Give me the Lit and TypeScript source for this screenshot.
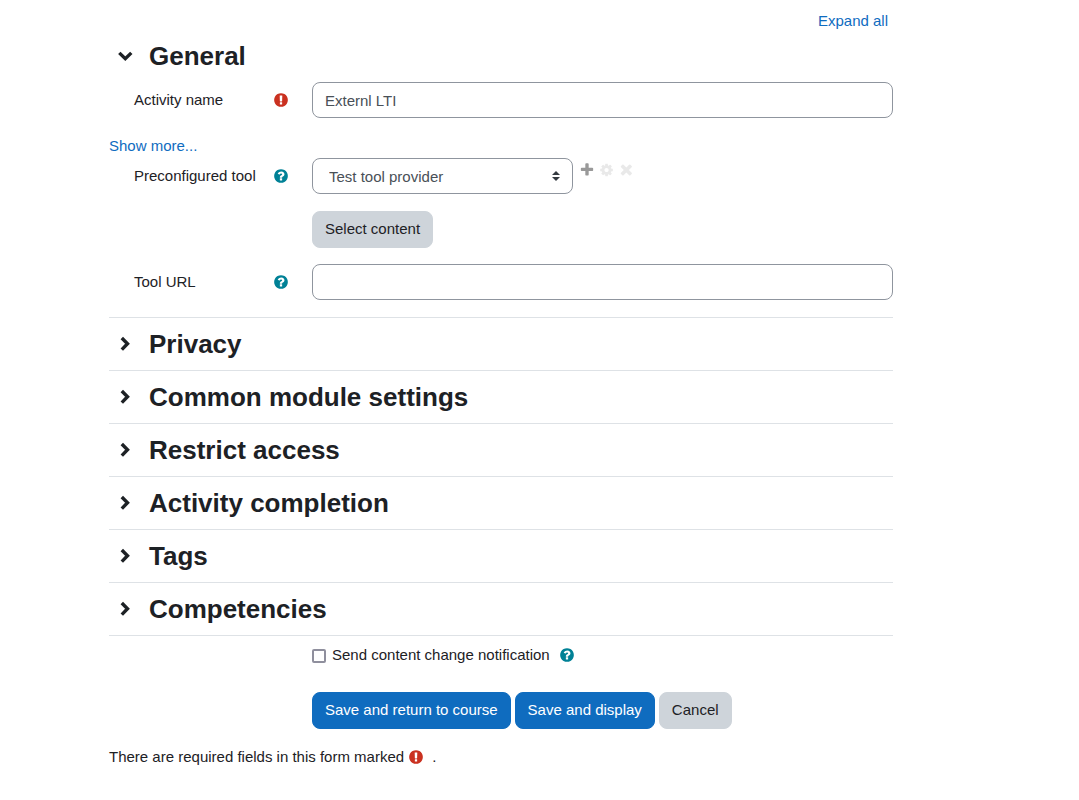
import { LitElement, html, css, svg } from "lit";
import { customElement, property, state } from "lit/decorators.js";

interface IconShape {
  box: string;
  path: string;
}

const ICONS: Record<string, IconShape> = {
  required: {
    box: "0 0 1792 1792",
    path: "M896 128q209 0 385.5 103t279.5 279.5 103 385.5-103 385.5-279.5 279.5-385.5 103-385.5-103-279.5-279.5-103-385.5 103-385.5 279.5-279.5 385.5-103zm128 1247v-190q0-14-9-23.5t-22-9.5h-192q-13 0-23 10t-10 23v190q0 13 10 23t23 10h192q13 0 22-9.5t9-23.5zm-2-344l18-621q0-12-10-18-10-8-24-8h-220q-14 0-24 8-10 6-10 18l17 621q0 10 10 17.5t24 7.5h185q14 0 23.5-7.5t10.5-17.5z",
  },
  help: {
    box: "0 0 1792 1792",
    path: "M1024 1376v-192q0-14-9-23t-23-9h-192q-14 0-23 9t-9 23v192q0 14 9 23t23 9h192q14 0 23-9t9-23zm256-672q0-88-55.5-163t-138.5-116-170-41q-243 0-371 213-15 24 8 42l132 100q7 6 19 6 16 0 25-12 53-68 86-92 34-24 86-24 48 0 85.5 26t37.5 59q0 38-20 61t-68 45q-63 28-115.5 86.5t-52.5 125.5v36q0 14 9 23t23 9h192q14 0 23-9t9-23q0-19 21.5-49.5t54.5-49.5q32-18 49-28.5t46-35 44.5-48 28-60.5 12.5-81zm384 192q0 209-103 385.5t-279.5 279.5-385.5 103-385.5-103-279.5-279.5-103-385.5 103-385.5 279.5-279.5 385.5-103 385.5 103 279.5 279.5 103 385.5z",
  },
  add: {
    box: "-20 -20 1832 1832",
    path: "M1600 736v192q0 40-28 68t-68 28h-416v416q0 40-28 68t-68 28h-192q-40 0-68-28t-28-68v-416h-416q-40 0-68-28t-28-68v-192q0-40 28-68t68-28h416v-416q0-40 28-68t68-28h192q40 0 68 28t28 68v416h416q40 0 68 28t28 68z",
  },
  edit: {
    box: "-20 -76 1944 1944",
    path: "M1152 896q0-106-75-181t-181-75-181 75-75 181 75 181 181 75 181-75 75-181zm512-109v222q0 12-8 23t-20 13l-185 28q-19 54-39 91 35 50 107 138 10 12 10 25t-9 23q-27 37-99 108t-94 71q-12 0-26-9l-138-108q-44 23-91 38-16 136-29 186-7 28-36 28h-222q-14 0-24.5-8.5t-11.5-21.5l-28-184q-49-16-90-37l-141 107q-10 9-25 9-14 0-25-11-126-114-165-168-7-10-7-23 0-12 8-23 15-21 51-66.5t54-70.5q-27-50-41-99l-183-27q-13-2-21-12.5t-8-23.5v-222q0-12 8-23t19-13l186-28q14-46 39-92-40-57-107-138-10-12-10-24 0-10 9-23 26-36 98.5-107.5t94.5-71.5q13 0 26 10l138 107q44-23 91-38 16-136 29-186 7-28 36-28h222q14 0 24.5 8.5t11.5 21.5l28 184q49 16 90 37l142-107q9-9 24-9 13 0 25 10 129 119 165 170 7 8 7 22 0 12-8 23-15 21-51 66.5t-54 70.5q26 50 41 98l183 28q13 2 21 12.5t8 23.5z",
  },
  remove: {
    box: "116 110 1700 1700",
    path: "M1490 1322q0 40-28 68l-136 136q-28 28-68 28t-68-28l-294-294-294 294q-28 28-68 28t-68-28l-136-136q-28-28-28-68t28-68l294-294-294-294q-28-28-28-68t28-68l136-136q28-28 68-28t68 28l294 294 294-294q28-28 68-28t68 28l136 136q28 28 28 68t-28 68l-294 294 294 294q28 28 28 68z",
  },
};

@customElement("form-icon")
class FormIcon extends LitElement {
  @property() name = "help";

  static styles = css`
    :host {
      display: inline-flex;
      flex: none;
    }
    .icon {
      display: block;
      width: 16px;
      height: 16px;
      fill: currentColor;
    }
  `;

  render() {
    const icon = ICONS[this.name];
    return html`<svg class="icon" viewBox=${icon.box} aria-hidden="true">
      ${svg`<path d=${icon.path}></path>`}
    </svg>`;
  }
}

@customElement("form-section")
class FormSection extends LitElement {
  @property() heading = "";
  @property({ type: Boolean, reflect: true }) open = false;

  static styles = css`
    :host {
      display: block;
      border-bottom: 1px solid #dee2e6;
    }
    .header {
      display: flex;
      align-items: center;
      gap: 8px;
      height: 52px;
    }
    .toggle {
      display: flex;
      align-items: center;
      justify-content: center;
      width: 32px;
      height: 32px;
      padding: 0;
      border: 0;
      border-radius: 50%;
      background: none;
      color: #1d2125;
      cursor: pointer;
    }
    .chevron {
      width: 16px;
      height: 16px;
      fill: none;
      stroke: currentColor;
      stroke-width: 3.4;
    }
    .title {
      margin: 0;
      font-size: 26px;
      line-height: 32px;
      font-weight: 700;
    }
    .body {
      padding-bottom: 17px;
    }
  `;

  private toggle() {
    this.open = !this.open;
  }

  render() {
    return html`
      <div class="header">
        <button
          class="toggle"
          type="button"
          aria-label=${this.heading}
          aria-expanded=${this.open ? "true" : "false"}
          @click=${this.toggle}
        >
          <svg class="chevron" viewBox="0 0 16 16" aria-hidden="true">
            ${this.open
              ? svg`<path d="M2.3 4.9L8.3 10.7L14.3 4.9"></path>`
              : svg`<path d="M4.8 2L10.5 7.8L4.8 13.6"></path>`}
          </svg>
        </button>
        <h3 class="title">${this.heading}</h3>
      </div>
      ${this.open ? html`<div class="body"><slot></slot></div>` : ""}
    `;
  }
}

@customElement("app-root")
class AppRoot extends LitElement {
  @state() private allOpen = false;

  private sections = [
    "Privacy",
    "Common module settings",
    "Restrict access",
    "Activity completion",
    "Tags",
    "Competencies",
  ];

  static styles = css`
    :host {
      display: block;
      font-family: "Liberation Sans", Arial, sans-serif;
      font-size: 15px;
      line-height: 23px;
      color: #1d2125;
      background: #fff;
    }
    * {
      box-sizing: border-box;
    }
    .form {
      padding: 9px 186px 24px 109px;
    }
    .link {
      color: #0f6cbf;
      text-decoration: none;
    }
    .top {
      display: flex;
      justify-content: flex-end;
      padding-right: 5px;
      margin-bottom: -2px;
    }
    .row {
      display: grid;
      grid-template-columns: 155px minmax(0, 1fr);
      column-gap: 23px;
      padding-left: 25px;
    }
    .name {
      display: flex;
      align-items: flex-start;
      justify-content: space-between;
      padding-top: 6px;
    }
    .mark {
      padding-top: 4px;
    }
    .more {
      margin: 16px 0 1px;
    }
    .content {
      margin-top: 17px;
    }
    .gap {
      margin-top: 16px;
    }
    .help {
      display: inline-flex;
      padding: 0;
      border: 0;
      background: none;
      color: #008196;
      cursor: pointer;
    }
    .help.mark {
      padding-top: 4px;
    }
    .required {
      color: #ca3120;
    }
    .input,
    .select {
      display: block;
      width: 100%;
      height: 36px;
      margin: 0;
      padding: 6px 12px;
      border: 1px solid #8f959e;
      border-radius: 8px;
      background: #fff;
      color: #495057;
      font: inherit;
    }
    .tool {
      display: flex;
      align-items: flex-start;
      gap: 6px;
    }
    .picker {
      position: relative;
      width: 261px;
    }
    .select {
      appearance: none;
      padding: 0 28px 0 16px;
    }
    .arrows {
      position: absolute;
      top: 13px;
      right: 13px;
      width: 8px;
      height: 10px;
      fill: #343a40;
      pointer-events: none;
    }
    .actions {
      display: flex;
      gap: 4px;
      padding-top: 4px;
    }
    .action {
      display: flex;
      padding: 0;
      border: 0;
      background: none;
      color: #999;
    }
    .action:disabled {
      color: #e9e9e9;
    }
    .button {
      padding: 5px 12px 7px;
      border: 1px solid #ced4da;
      border-radius: 8px;
      background: #ced4da;
      color: #1d2125;
      font: inherit;
      cursor: pointer;
    }
    .primary {
      border-color: #0f6cbf;
      background: #0f6cbf;
      color: #fff;
    }
    .check {
      display: flex;
      align-items: center;
      padding-top: 7px;
    }
    .box {
      appearance: none;
      width: 14px;
      height: 14px;
      margin: 2px 6px 0 0;
      border: 2px solid #8f8f9d;
      border-radius: 2px;
      background: #fff;
    }
    .box:checked {
      background: #0f6cbf;
    }
    .check-help {
      margin-left: 9px;
    }
    .buttons {
      display: flex;
      flex-wrap: wrap;
      gap: 4px;
      margin-top: 26px;
    }
    .note {
      display: flex;
      align-items: center;
      margin: 16px 0 0;
    }
    .note-icon {
      margin: 0 8px 0 4px;
    }
  `;

  private expandAll(event: Event) {
    event.preventDefault();
    this.allOpen = !this.allOpen;
  }

  private help(label: string, extra: string) {
    return html`<button class="help ${extra}" type="button" aria-label="Help with ${label}">
      <form-icon name="help"></form-icon>
    </button>`;
  }

  render() {
    return html`
      <form class="form" @submit=${(e: Event) => e.preventDefault()}>
        <div class="top">
          <a class="link" href="#" @click=${this.expandAll}>${this.allOpen ? "Collapse all" : "Expand all"}</a>
        </div>

        <form-section heading="General" open>
          <div class="row">
            <div class="name">
              <label for="name">Activity name</label>
              <form-icon class="required mark" name="required"></form-icon>
            </div>
            <input class="input" id="name" type="text" .value=${"Externl LTI"} required />
          </div>

          <div class="more"><a class="link" href="#">Show more...</a></div>

          <div class="row">
            <div class="name">
              <label for="tool">Preconfigured tool</label>
              ${this.help("Preconfigured tool", "mark")}
            </div>
            <div>
              <div class="tool">
                <div class="picker">
                  <select class="select" id="tool">
                    <option>Test tool provider</option>
                  </select>
                  <svg class="arrows" viewBox="0 0 8 10" aria-hidden="true">
                    <path d="M0 4L4 0L8 4zM0 6L4 10L8 6z"></path>
                  </svg>
                </div>
                <div class="actions">
                  <button class="action" type="button" aria-label="Add"><form-icon name="add"></form-icon></button>
                  <button class="action" type="button" aria-label="Edit" disabled><form-icon name="edit"></form-icon></button>
                  <button class="action" type="button" aria-label="Delete" disabled><form-icon name="remove"></form-icon></button>
                </div>
              </div>
              <button class="button content" type="button">Select content</button>
            </div>
          </div>

          <div class="row gap">
            <div class="name">
              <label for="url">Tool URL</label>
              ${this.help("Tool URL", "mark")}
            </div>
            <input class="input" id="url" type="text" />
          </div>
        </form-section>

        ${this.sections.map(
          (name) => html`<form-section heading=${name} ?open=${this.allOpen}></form-section>`
        )}

        <div class="row">
          <span></span>
          <div>
            <div class="check">
              <input class="box" id="notify" type="checkbox" />
              <label for="notify">Send content change notification</label>
              ${this.help("Send content change notification", "check-help")}
            </div>
            <div class="buttons">
              <button class="button primary" type="submit">Save and return to course</button>
              <button class="button primary" type="submit">Save and display</button>
              <button class="button" type="button">Cancel</button>
            </div>
          </div>
        </div>

        <p class="note">
          There are required fields in this form marked
          <form-icon class="required note-icon" name="required"></form-icon>
          .
        </p>
      </form>
    `;
  }
}
